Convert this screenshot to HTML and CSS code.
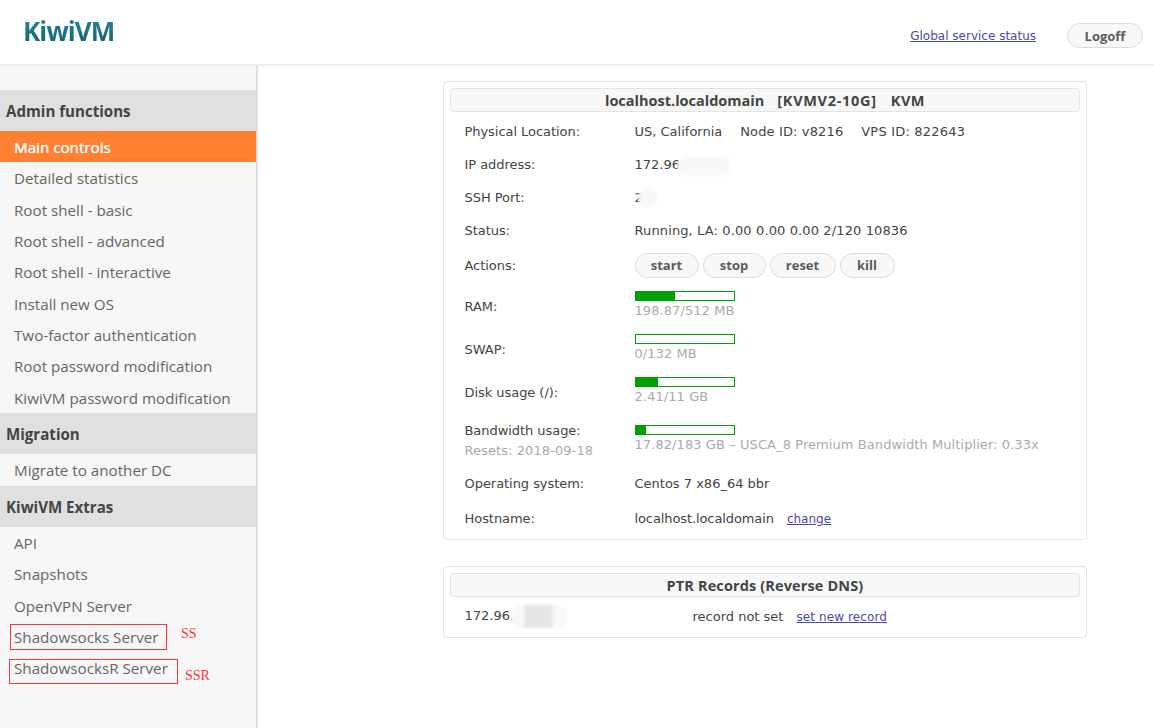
FILE: index.html
```html
<!DOCTYPE html>
<html lang="en">
<head>
<meta charset="utf-8">
<title>KiwiVM</title>
<link rel="stylesheet" href="styles.css">
</head>
<body>
<header class="top">
  <div class="logo">KiwiVM</div>
  <div class="top-right">
    <a class="link" href="#">Global service status</a>
    <button class="btn logoff">Logoff</button>
  </div>
</header>
<div class="page">
  <nav class="side">
    <h3 class="sec">Admin functions</h3>
    <a class="item active">Main controls</a>
    <a class="item">Detailed statistics</a>
    <a class="item">Root shell - basic</a>
    <a class="item">Root shell - advanced</a>
    <a class="item">Root shell - interactive</a>
    <a class="item">Install new OS</a>
    <a class="item">Two-factor authentication</a>
    <a class="item">Root password modification</a>
    <a class="item">KiwiVM password modification</a>
    <h3 class="sec">Migration</h3>
    <a class="item item-single">Migrate to another DC</a>
    <h3 class="sec">KiwiVM Extras</h3>
    <a class="item">API</a>
    <a class="item">Snapshots</a>
    <a class="item">OpenVPN Server</a>
    <a class="item">Shadowsocks Server</a>
    <a class="item">ShadowsocksR Server</a>
    <span class="mark mark-ss"></span>
    <span class="note note-ss">SS</span>
    <span class="mark mark-ssr"></span>
    <span class="note note-ssr">SSR</span>
  </nav>
  <main class="main">
    <section class="card">
      <h2 class="card-title">localhost.localdomain<span class="plan">[KVMV2-10G]</span><span class="virt">KVM</span></h2>
      <div class="row r33"><div class="lab">Physical Location:</div><div class="val">US, California<span class="node">Node ID: v8216</span><span class="vps">VPS ID: 822643</span></div></div>
      <div class="row r33"><div class="lab">IP address:</div><div class="val">172.96<span class="blur blur-ip"></span></div></div>
      <div class="row r33"><div class="lab">SSH Port:</div><div class="val">2<span class="blur blur-port"></span></div></div>
      <div class="row r33"><div class="lab">Status:</div><div class="val digits">Running, LA: 0.00 0.00 0.00 2/120 10836</div></div>
      <div class="row r36"><div class="lab">Actions:</div><div class="val actions"><button class="btn b-start">start</button><button class="btn b-stop">stop</button><button class="btn b-reset">reset</button><button class="btn b-kill">kill</button></div></div>
      <div class="row meter-row"><div class="lab">RAM:</div><div class="val"><div class="bar"><div class="fill" style="width:40%"></div></div><div class="muted">198.87/512 MB</div></div></div>
      <div class="row meter-row"><div class="lab">SWAP:</div><div class="val"><div class="bar"></div><div class="muted">0/132 MB</div></div></div>
      <div class="row meter-row"><div class="lab">Disk usage (/):</div><div class="val"><div class="bar"><div class="fill" style="width:23%"></div></div><div class="muted">2.41/11 GB</div></div></div>
      <div class="row bw-row"><div class="lab">Bandwidth usage:<div class="muted resets">Resets: 2018-09-18</div></div><div class="val"><div class="bar"><div class="fill" style="width:11%"></div></div><div class="muted">17.82/183 GB &#8211; USCA_8 Premium Bandwidth Multiplier: 0.33x</div></div></div>
      <div class="row r35"><div class="lab">Operating system:</div><div class="val">Centos 7 x86_64 bbr</div></div>
      <div class="row r35"><div class="lab">Hostname:</div><div class="val"><span class="host">localhost.localdomain</span><a class="link change" href="#">change</a></div></div>
    </section>
    <section class="card ptr">
      <h2 class="card-title ptr-title">PTR Records (Reverse DNS)</h2>
      <div class="ptr-row"><div class="ptr-ip">172.96.<span class="blur blur-ptr"></span></div><div>record not set<a class="link set-link" href="#">set new record</a></div></div>
    </section>
  </main>
</div>
</body>
</html>
```

FILE: styles.css
```css
* { box-sizing: border-box; }
html, body { margin: 0; height: 100%; }
body {
  width: 1154px;
  height: 728px;
  overflow: hidden;
  background: #fff;
  color: #444;
  font-family: "DejaVu Sans", sans-serif;
  font-size: 13px;
}
.top {
  height: 66px;
  border-bottom: 2px solid #eeeeee;
  display: flex;
  justify-content: space-between;
  align-items: flex-start;
  padding-left: 23px;
}
.logo {
  margin-top: 13px;
  font-family: "Open Sans", sans-serif;
  font-size: 26px;
  line-height: 36px;
  font-weight: 700;
  letter-spacing: -0.9px;
  background: linear-gradient(#2b8ba0, #145a6c);
  -webkit-background-clip: text;
  background-clip: text;
  color: transparent;
}
.top-right {
  display: flex;
  align-items: center;
  gap: 31px;
  margin-top: 23px;
  padding-right: 11px;
}
.top-right .link { padding-top: 1px; }
.link { color: #4a4aa8; text-decoration: underline; font-size: 12px; }
.btn {
  height: 25px;
  padding: 0;
  border: 1px solid #dcdcdc;
  border-radius: 13px;
  background: #f8f8f8;
  color: #5c5c5c;
  font-family: "Open Sans", sans-serif;
  font-size: 13px;
  font-weight: 700;
}
.logoff { width: 76px; }
.b-start { width: 64px; }
.b-stop { width: 63px; }
.b-reset { width: 66px; }
.b-kill { width: 55px; }
.page { display: flex; height: 662px; }
.side {
  position: relative;
  width: 258px;
  flex: none;
  padding-top: 24px;
  background: #f7f7f7;
  border-right: 2px solid #dddddd;
  font-family: "Open Sans", sans-serif;
}
.sec {
  margin: 0;
  height: 41px;
  padding: 1px 0 0 6px;
  line-height: 41px;
  background: #e0e0e0;
  color: #444;
  font-size: 15.1px;
  font-weight: 700;
}
.item {
  display: block;
  height: 31.35px;
  line-height: 32.6px;
  padding-left: 14px;
  color: #666;
  font-size: 15.2px;
}
.item-single { height: 32px; }
.item.active { background: #ff8030; color: #fff; text-shadow: 0 0 1px #fff; }
.mark { position: absolute; border: 1px solid #f33; pointer-events: none; }
.mark-ss { left: 10px; top: 558px; width: 157px; height: 26px; }
.mark-ssr { left: 9px; top: 593px; width: 169px; height: 25px; }
.note { position: absolute; font-family: "Liberation Serif", serif; font-size: 14px; color: #f33; }
.note-ss { left: 181px; top: 560px; }
.note-ssr { left: 185px; top: 602px; }
.main { flex: 1; padding: 15px 0 0 185px; }
.card {
  width: 644px;
  height: 459px;
  padding: 6px;
  border: 1px solid #e4e4e4;
  border-radius: 4px;
}
.card-title {
  margin: 0 0 3px;
  height: 24px;
  line-height: 24px;
  border: 1px solid #e4e4e4;
  border-radius: 3px;
  background: #f8f8f8;
  color: #444;
  text-align: center;
  font-family: "Open Sans", sans-serif;
  font-size: 14.5px;
  font-weight: 700;
}
.plan { margin-left: 13px; letter-spacing: 0.7px; }
.virt { margin-left: 14px; letter-spacing: 0.5px; }
.ptr-title { letter-spacing: 0.13px; }
.row { display: flex; align-items: center; padding-left: 14.5px; }
.r33 { height: 33px; }
.r36 { height: 36px; }
.r35 { height: 35px; }
.lab { width: 170px; flex: none; font-size: 13px; letter-spacing: -0.05px; }
.val { font-size: 13px; white-space: nowrap; }
.digits { letter-spacing: 0.12px; }
.node { margin-left: 18px; letter-spacing: 0.13px; }
.vps { margin-left: 18px; letter-spacing: 0.2px; }
.host { letter-spacing: -0.1px; }
.change { margin-left: 13px; }
.set-link { margin-left: 13px; letter-spacing: 0.1px; }
.actions { display: flex; gap: 4px; }
.meter-row { height: 43px; align-items: flex-start; padding-top: 8px; }
.meter-row .lab { padding-top: 8px; }
.bw-row { height: 54px; align-items: flex-start; padding-top: 11px; }
.bw-row .val { margin-top: 2px; }
.bar {
  width: 100px;
  height: 10px;
  border: 1px solid #00a000;
  background: #fff;
}
.fill { height: 100%; background: #00a000; }
.muted { color: #aaa; font-size: 13px; line-height: 20px; letter-spacing: 0.08px; }
.resets { margin-top: 3px; }
.blur {
  position: relative;
  display: inline-block;
  vertical-align: middle;
  background: #f8f8f8;
  filter: blur(1px);
}
.blur-ip { width: 54px; height: 20px; margin-left: -3px; border-radius: 10px; top: 1px; }
.blur-port { width: 20px; height: 20px; margin-left: -5px; border-radius: 10px; }
.blur-ptr { width: 56px; height: 23px; margin-left: -3px; border-radius: 11px; background: linear-gradient(90deg, #f8f8f8 22%, #e6e6e6 26%, #e6e6e6 72%, #f8f8f8 76%); }
.ptr { height: 72px; margin-top: 26px; }
.ptr-row { display: flex; height: 32px; align-items: center; padding-left: 14.5px; }
.ptr-ip { width: 228px; }
```
